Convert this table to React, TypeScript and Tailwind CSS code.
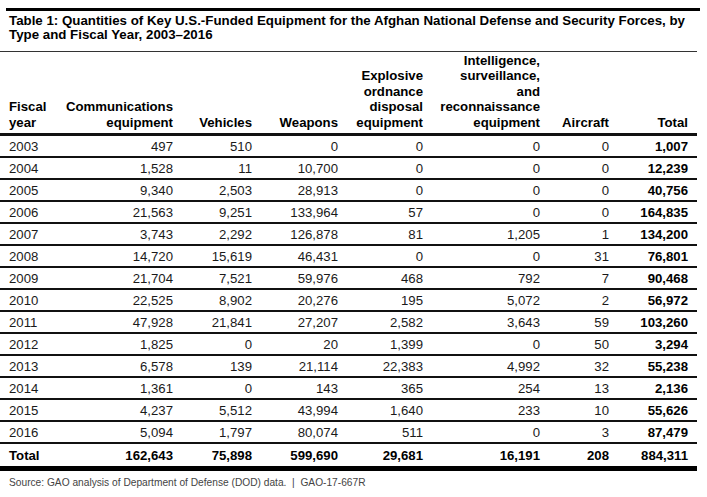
import React from "react";

const rows: string[][] = [
  ["2003", "497", "510", "0", "0", "0", "0", "1,007"],
  ["2004", "1,528", "11", "10,700", "0", "0", "0", "12,239"],
  ["2005", "9,340", "2,503", "28,913", "0", "0", "0", "40,756"],
  ["2006", "21,563", "9,251", "133,964", "57", "0", "0", "164,835"],
  ["2007", "3,743", "2,292", "126,878", "81", "1,205", "1", "134,200"],
  ["2008", "14,720", "15,619", "46,431", "0", "0", "31", "76,801"],
  ["2009", "21,704", "7,521", "59,976", "468", "792", "7", "90,468"],
  ["2010", "22,525", "8,902", "20,276", "195", "5,072", "2", "56,972"],
  ["2011", "47,928", "21,841", "27,207", "2,582", "3,643", "59", "103,260"],
  ["2012", "1,825", "0", "20", "1,399", "0", "50", "3,294"],
  ["2013", "6,578", "139", "21,114", "22,383", "4,992", "32", "55,238"],
  ["2014", "1,361", "0", "143", "365", "254", "13", "2,136"],
  ["2015", "4,237", "5,512", "43,994", "1,640", "233", "10", "55,626"],
  ["2016", "5,094", "1,797", "80,074", "511", "0", "3", "87,479"],
];

const totals = ["Total", "162,643", "75,898", "599,690", "29,681", "16,191", "208", "884,311"];

const cols = "grid grid-cols-[60px_113px_79px_86px_85px_117px_69px_88px]";

function Row({ cells }: { cells: string[] }) {
  return (
    <div className={`${cols} h-[22px] items-center border-b-2 border-[#111] text-[13.2px] leading-[15px]`}>
      {cells.map((c, i) => (
        <div
          key={i}
          className={`${i === 0 ? "pl-[9px] text-left" : "text-right"} ${i === 7 ? "pr-[9px] font-bold text-black" : "text-[#1a1a1a]"}`}
        >
          {c}
        </div>
      ))}
    </div>
  );
}

export default function App() {
  return (
    <div className="w-[707px] h-[497px] bg-white pt-[8px] font-['Liberation_Sans',Arial,sans-serif] overflow-hidden">
      <div className="w-[697px]">
        <div className="ml-[6px] w-[694px] border-t-[3px] border-black" />
        <div className="pl-[9px] pt-[3px] pb-[10px] border-b border-[#333] text-[13.3px] leading-[13.5px] font-bold text-black">
          Table 1: Quantities of Key U.S.-Funded Equipment for the Afghan National Defense and Security Forces, by
          <br />
          Type and Fiscal Year, 2003–2016
        </div>

        <div className={`${cols} h-[84px] items-end pb-[3px] border-b-[3px] border-[#111] text-[13.2px] leading-[15.5px] font-bold text-black`}>
          <div className="pl-[9px]">
            Fiscal
            <br />
            year
          </div>
          <div className="text-right">
            Communications
            <br />
            equipment
          </div>
          <div className="text-right">Vehicles</div>
          <div className="text-right">Weapons</div>
          <div className="text-right">
            Explosive
            <br />
            ordnance
            <br />
            disposal
            <br />
            equipment
          </div>
          <div className="text-right">
            Intelligence,
            <br />
            surveillance,
            <br />
            and
            <br />
            reconnaissance
            <br />
            equipment
          </div>
          <div className="text-right">Aircraft</div>
          <div className="text-right pr-[9px]">Total</div>
        </div>

        {rows.map((r) => (
          <Row key={r[0]} cells={r} />
        ))}
        <div className="border-b-[5px] border-black">
          <div className={`${cols} h-[22px] items-center text-[13.2px] leading-[15px] font-bold text-black`}>
            {totals.map((c, i) => (
              <div key={i} className={`${i === 0 ? "pl-[9px]" : "text-right"} ${i === 7 ? "pr-[9px]" : ""}`}>
                {c}
              </div>
            ))}
          </div>
        </div>

        <div className="pl-[9px] pt-[6px] text-[10.2px] leading-[12px] text-[#444]">
          Source: GAO analysis of Department of Defense (DOD) data.&nbsp;&nbsp;|&nbsp;&nbsp;GAO-17-667R
        </div>
      </div>
    </div>
  );
}
